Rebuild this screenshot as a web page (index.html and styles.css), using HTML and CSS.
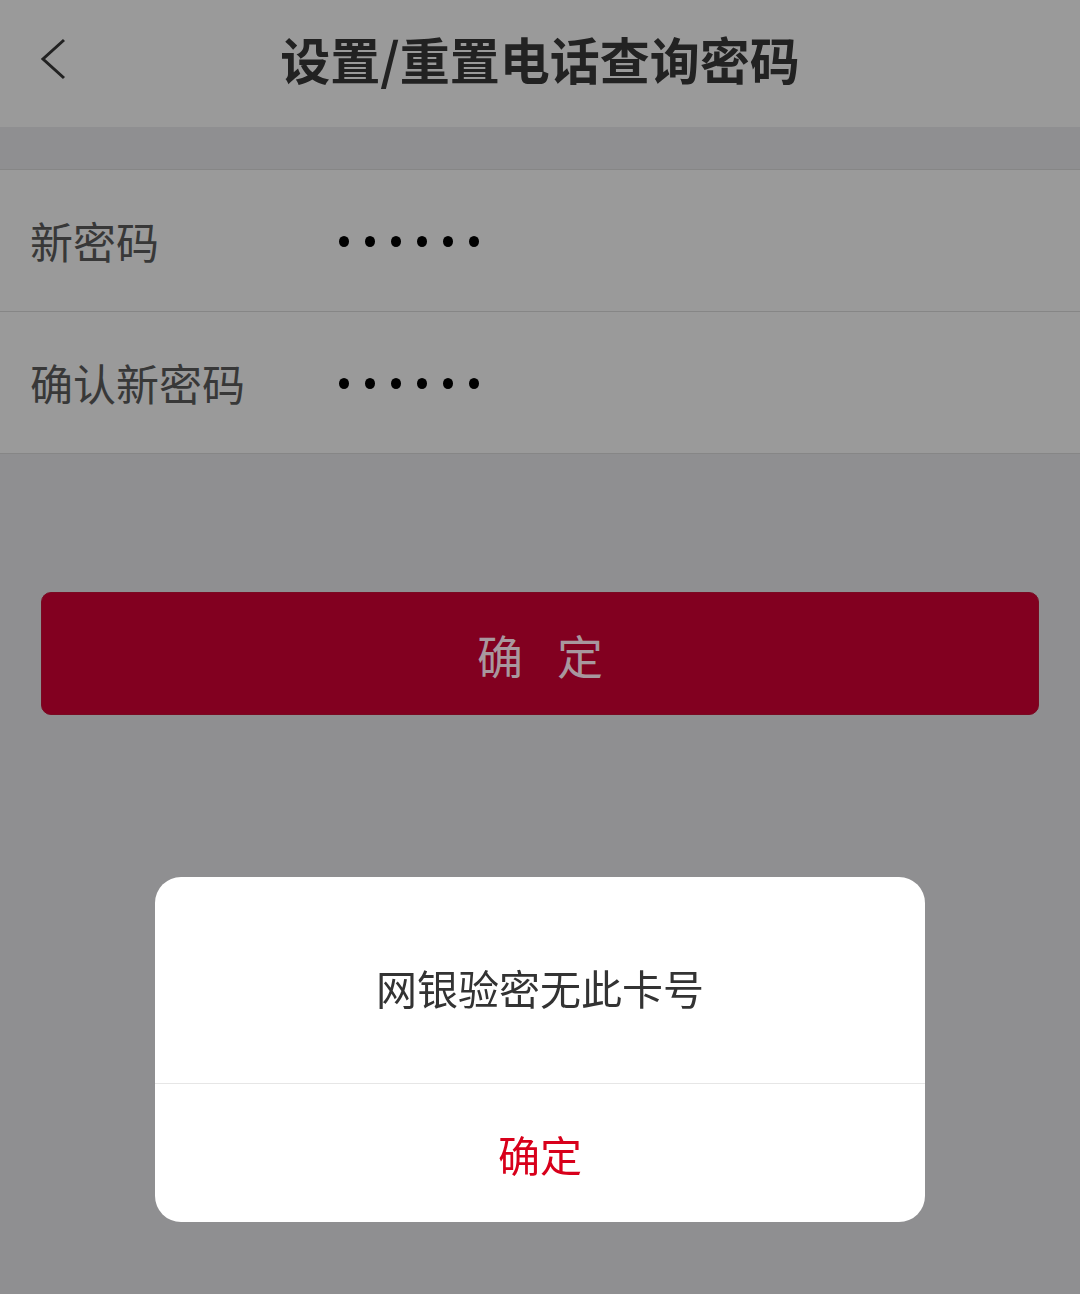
FILE: index.html
```html
<!DOCTYPE html>
<html lang="zh-CN">
<head>
    <meta charset="UTF-8">
    <title>设置/重置电话查询密码</title>
    <link rel="stylesheet" href="styles.css">
</head>
<body>

    <div class="page">
        <div class="top-bar">
            <a class="back" href="#">
                <svg width="30" height="44" viewBox="0 0 30 44">
                    <polyline points="24,2 3,21 24,40" fill="none" stroke="#222" stroke-width="3"/>
                </svg>
            </a>
            <h1 class="title">设置/重置电话查询密码</h1>
        </div>

        <div class="gap"></div>

        <div class="form-list">
            <div class="form-row">
                <span class="label">新密码</span>
                <span class="dots"><i></i><i></i><i></i><i></i><i></i><i></i></span>
            </div>
            <div class="form-row">
                <span class="label">确认新密码</span>
                <span class="dots"><i></i><i></i><i></i><i></i><i></i><i></i></span>
            </div>
        </div>

        <div class="btn-wrap">
            <button class="btn-submit">确定</button>
        </div>
    </div>

    <!-- 提示框 -->
    <div class="mask">
        <div class="dialog">
            <div class="dialog-msg">网银验密无此卡号</div>
            <div class="dialog-btn">确定</div>
        </div>
    </div>

</body>
</html>
```

FILE: styles.css
```css
html, body { margin: 0; padding: 0; }
body { background: #8f8f91; font-family: "Noto Sans CJK SC", "Noto Sans", sans-serif; height: 1294px; overflow: hidden; }
.top-bar { height: 127px; background: #9a9a9a; display: flex; align-items: center; justify-content: center; position: relative; }
.back { position: absolute; left: 40px; top: 38px; display: block; }
.back svg { display: block; }
.title { margin: 0; font-size: 50px; font-weight: bold; color: #222; line-height: 1; padding-bottom: 12px; }
.gap { height: 42px; }
.form-list { background: #9a9a9a; border-top: 1px solid #868686; }
.form-row { height: 141px; border-bottom: 1px solid #868686; display: flex; align-items: center; padding-left: 30px; }
.label { width: 309px; font-size: 43px; color: #383838; line-height: 1; }
.dots { display: flex; gap: 16px; padding-top: 2px; }
.dots i { display: block; width: 10px; height: 11px; border-radius: 50%; background: #000; }
.btn-wrap { padding: 138px 41px 0; }
.btn-submit { display: block; width: 100%; height: 123px; border: 1px solid #7a0a22; border-radius: 10px; background: #820020; color: #a8979e; font-family: inherit; font-size: 46px; letter-spacing: 34px; text-indent: 34px; padding: 0; }
.mask { position: fixed; top: 0; left: 0; right: 0; bottom: 0; display: flex; justify-content: center; align-items: flex-start; padding-top: 877px; }
.dialog { width: 770px; background: #fff; border-radius: 26px; overflow: hidden; }
.dialog-msg { height: 207px; display: flex; align-items: center; justify-content: center; font-size: 41px; color: #333; border-bottom: 1px solid #e6e6e6; padding-top: 14px; box-sizing: border-box; }
.dialog-btn { height: 138px; display: flex; align-items: center; justify-content: center; font-size: 42px; color: #d8001b; }
```
